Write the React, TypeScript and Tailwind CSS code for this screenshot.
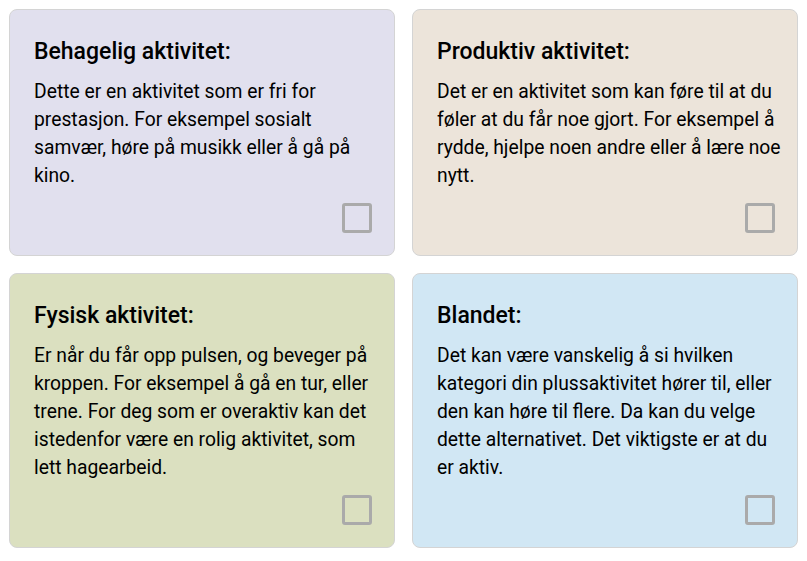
const cards = [
  {
    title: "Behagelig aktivitet:",
    text: "Dette er en aktivitet som er fri for prestasjon. For eksempel sosialt samvær, høre på musikk eller å gå på kino.",
    bg: "bg-[#e1e0ee]",
  },
  {
    title: "Produktiv aktivitet:",
    text: "Det er en aktivitet som kan føre til at du føler at du får noe gjort. For eksempel å rydde, hjelpe noen andre eller å lære noe nytt.",
    bg: "bg-[#ece4da]",
  },
  {
    title: "Fysisk aktivitet:",
    text: "Er når du får opp pulsen, og beveger på kroppen. For eksempel å gå en tur, eller trene. For deg som er overaktiv kan det istedenfor være en rolig aktivitet, som lett hagearbeid.",
    bg: "bg-[#dbe0c0]",
  },
  {
    title: "Blandet:",
    text: "Det kan være vanskelig å si hvilken kategori din plussaktivitet hører til, eller den kan høre til flere. Da kan du velge dette alternativet. Det viktigste er at du er aktiv.",
    bg: "bg-[#d1e7f4]",
  },
];

export default function App() {
  return (
    <div className="min-h-screen bg-white font-['Roboto',sans-serif] text-black">
      <div className="grid grid-cols-2 gap-[17px] p-[9px]">
        {cards.map((c) => (
          <div
            key={c.title}
            className={`flex flex-col rounded-lg border border-[#d4d4d4] ${c.bg} pl-[24px] pr-[22px] pt-[28px] pb-[22px]`}
          >
            <h3 className="text-[23px] font-medium leading-[28px]">{c.title}</h3>
            <p className="-mr-[9px] mt-[12px] text-[19.3px] leading-[28px]">{c.text}</p>
            <div className="mt-[13px] h-[30px] w-[30px] self-end rounded-[3px] border-[3px] border-[#aaaaaa]" />
          </div>
        ))}
      </div>
    </div>
  );
}
